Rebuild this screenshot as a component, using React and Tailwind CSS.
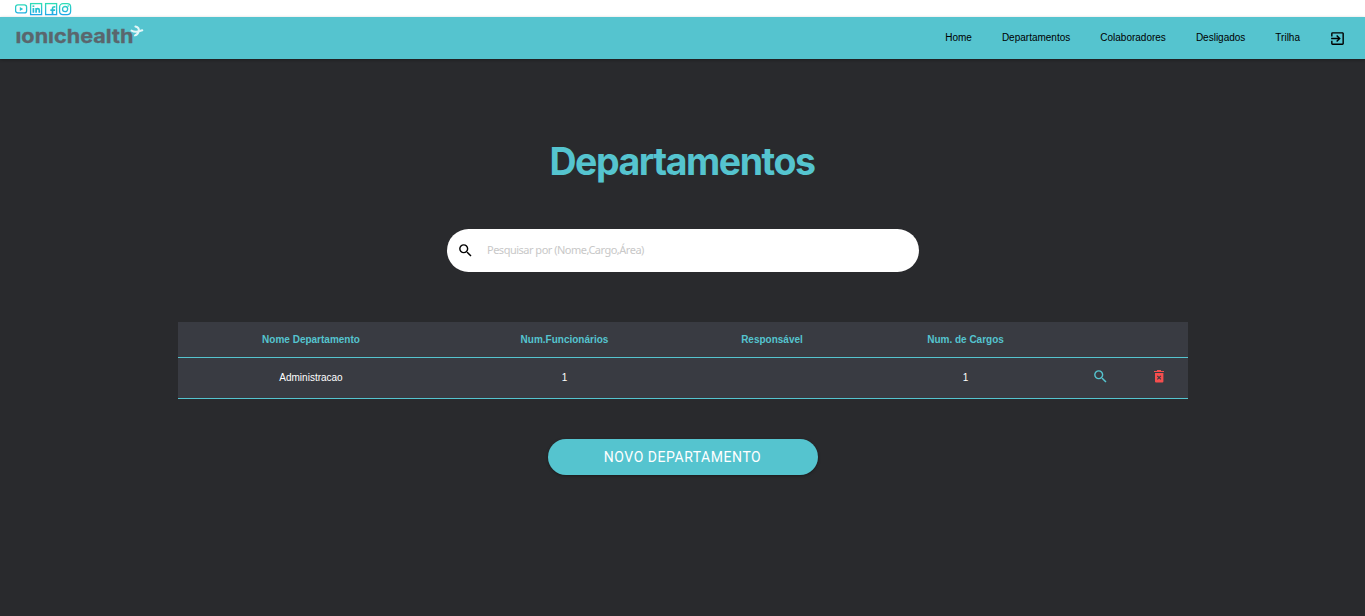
import React from "react";
import { MdSearch, MdExitToApp } from "react-icons/md";

const links = ["Home", "Departamentos", "Colaboradores", "Desligados", "Trilha"];

function SocialIcons() {
  return (
    <svg width="58" height="14" viewBox="0 0 58 14" fill="none" stroke="url(#social)" strokeWidth="1.3">
      <defs>
        <linearGradient id="social" gradientUnits="userSpaceOnUse" x1="0" y1="1" x2="0" y2="14">
          <stop offset="0" stopColor="#2fe0b4" />
          <stop offset="1" stopColor="#1fa2ee" />
        </linearGradient>
      </defs>
      <rect x="0.6" y="2.9" width="11" height="8" rx="2.2" />
      <path d="M4.8 4.9v4l3.4-2z" fill="url(#social)" stroke="none" />
      <rect x="15.6" y="1.6" width="11" height="11" />
      <path d="M18.4 6v4.8M21.1 10.8V6M21.1 8.2c0-2 3.2-2 3.2 0v2.6" strokeWidth="1.7" />
      <path d="M17.5 3.4h1.8v1.6h-1.8z" fill="url(#social)" stroke="none" />
      <rect x="30.6" y="1.6" width="11" height="11" />
      <path d="M37.5 12.6V6.7c0-1.4.6-2 2.8-1.9M35.3 8.2h4.8" strokeWidth="1.7" />
      <rect x="44.6" y="1.6" width="11" height="11" rx="3.4" />
      <circle cx="50.1" cy="7.1" r="2.6" />
      <circle cx="53.2" cy="4" r="0.8" fill="url(#social)" stroke="none" />
    </svg>
  );
}

function Logo() {
  return (
    <svg width="130" height="28" viewBox="0 0 130 28">
      <text x="0.5" y="21" textLength="118" lengthAdjust="spacingAndGlyphs" fontFamily="Inter, sans-serif" fontWeight="700" fontSize="19" fill="#5a666d" stroke="#5a666d" strokeWidth="0.3">ıonıchealth</text>
      <path d="M116.5 8.6c3 1.6 7 1.2 10.8-.3M120.4 4.4c2.8.6 3.8 2.4 3.4 4.6-.5 2.4-1.8 3.8-3.8 4.4" fill="none" stroke="#e4f7f8" strokeWidth="2" strokeLinecap="round" />
    </svg>
  );
}

function TrashIcon() {
  return (
    <svg width="10" height="13" viewBox="0 0 10 13" className="mx-auto mb-[3px] text-[#f64e4e]" fill="currentColor">
      <path d="M0 1h3V0h4v1h3v1H0zM1 3h8.4v8.4a1 1 0 0 1-1 1H2a1 1 0 0 1-1-1z" />
      <path d="M3.3 5.8l3.6 3.6M6.9 5.8L3.3 9.4" stroke="#393b42" strokeWidth="1.2" />
    </svg>
  );
}

export default function App() {
  return (
    <div className="flex h-[616px] w-full flex-col overflow-hidden bg-[#292a2d] font-['Liberation_Sans',Arial,sans-serif]">
      <div className="h-[17px] shrink-0 bg-white pt-[2px] pl-[15px]">
        <SocialIcons />
      </div>
      <header className="flex h-[42px] shrink-0 items-center justify-between bg-[#55c4cf] pr-[19px] pl-[15px] shadow-[0_1px_3px_rgba(0,0,0,0.3)]">
        <div className="pb-1">
          <Logo />
        </div>
        <nav className="flex items-center gap-[30px] text-[10px] text-black">
          {links.map((l) => (
            <a key={l} className="pb-px">{l}</a>
          ))}
          <MdExitToApp size={17} className="-ml-px" />
        </nav>
      </header>
      <main className="flex flex-col items-center">
        <h1 className="mt-[78px] flex h-[50px] items-center text-[38px] font-bold text-[#55c4cf]">
          <svg width="274" height="50" viewBox="-4 0 274 50" fill="currentColor" fontFamily="Inter, sans-serif">
            <text x="-0.5" y="37.5" textLength="265" lengthAdjust="spacingAndGlyphs" letterSpacing="-1.5">Departamentos</text>
          </svg>
        </h1>
        <label className="mt-[42px] flex h-[43px] w-[472px] items-center rounded-[22px] bg-white pl-[10px]">
          <MdSearch size={17} className="text-black" />
          <input
            className="ml-[13.5px] w-[400px] bg-transparent font-['Noto_Sans',sans-serif] text-[11px] tracking-[-0.5px] outline-none placeholder:text-[#c8c8c8]"
            placeholder="Pesquisar por (Nome,Cargo,Área)"
          />
        </label>
        <table className="mt-[50px] w-[1010px] table-fixed border-separate border-spacing-0 bg-[#393b42] text-center text-[10px] text-white">
          <colgroup>
            <col className="w-[267px]" />
            <col className="w-[240px]" />
            <col className="w-[175px]" />
            <col className="w-[212px]" />
            <col className="w-[58px]" />
            <col className="w-[58px]" />
          </colgroup>
          <thead>
            <tr className="h-[36px] text-[#55c4cf] [&>th]:border-b [&>th]:border-[#55c4cf]">
              <th>Nome Departamento</th>
              <th>Num.Funcionários</th>
              <th>Responsável</th>
              <th>Num. de Cargos</th>
              <th />
              <th />
            </tr>
          </thead>
          <tbody>
            <tr className="h-[41px] [&>td]:border-b [&>td]:border-[#55c4cf]">
              <td className="pb-[2px]">Administracao</td>
              <td className="pb-[2px]">1</td>
              <td />
              <td className="pb-[2px]">1</td>
              <td>
                <MdSearch size={17} className="mx-auto mb-[3px] text-[#55c4cf]" />
              </td>
              <td>
                <TrashIcon />
              </td>
            </tr>
          </tbody>
        </table>
        <button className="mt-[40px] h-[36px] w-[270px] rounded-full bg-[#55c4cf] font-['Roboto',sans-serif] text-[14px] tracking-[0.54px] text-white shadow-[0_1px_3px_rgba(0,0,0,0.35)]">
          NOVO DEPARTAMENTO
        </button>
      </main>
    </div>
  );
}
